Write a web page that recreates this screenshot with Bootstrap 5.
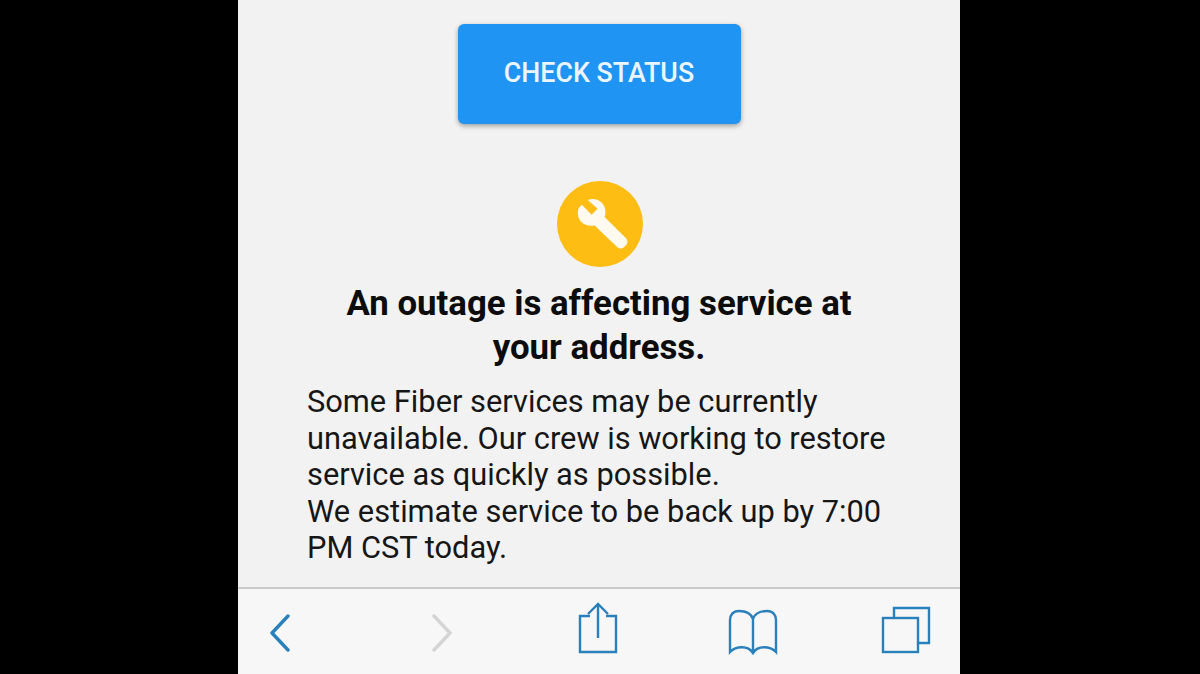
<!DOCTYPE html>
<html lang="en">
<head>
    <meta charset="UTF-8">
    <title>Outage</title>
    <link href="https://cdn.jsdelivr.net/npm/bootstrap@5.3.0/dist/css/bootstrap.min.css" rel="stylesheet">
    <style>
        html, body { height: 674px; overflow: hidden; background: #000; }
        body { font-family: Roboto, "Liberation Sans", sans-serif; color: #161616; }
        .phone-view { width: 722px; height: 674px; margin-left: 238px; background: #f2f2f2; }
        .page-area { height: 587px; padding-top: 24px; }
        .status-btn { width: 283px; height: 100px; background: #2094f3; border: 0; border-radius: 6px; color: #eaf5ff; font-size: 26.8px; font-weight: 500; box-shadow: 0 2px 5px rgba(0,0,0,.35); padding-bottom: 8px; }
        .status-btn:hover { background: #2094f3; color: #eaf5ff; }
        .wrench-circle { width: 86px; height: 86px; margin-top: 57px; margin-left: 2px; background: #fdbd13; }
        .outage-title { width: 600px; margin-top: 14px; font-size: 34.8px; line-height: 44px; font-weight: 700; color: #0c0c0c; }
        .outage-text { margin: 15px 0 0 69px; width: 590px; font-size: 30.8px; line-height: 36.6px; }
        .safari-bar { height: 87px; background: #f7f7f7; border-top: 2px solid #c8c8c8; display: grid; grid-template-columns: 84px 240px 72px 238px 68px; justify-items: center; align-items: start; }
        .safari-bar svg { display: block; fill: none; stroke-width: 2.4; }
        .tool-on { stroke: #2a80ba; }
        .tool-off { stroke: #d4d4d4; }
        .safari-bar .ico-back { margin-top: 25px; stroke-width: 3.4; }
        .ico-share { margin-top: 13px; }
        .ico-book { margin-top: 20px; }
        .ico-tabs { margin-top: 17px; }
    </style>
</head>
<body>
    <div class="phone-view d-flex flex-column" id="phone">
        <div class="page-area d-flex flex-column align-items-center">
            <button type="button" class="btn status-btn">CHECK STATUS</button>
            <div class="wrench-circle rounded-circle d-flex align-items-center justify-content-center">
                <svg width="55" height="55" viewBox="0 0 56 56">
                    <path d="M9 8 L19 18 L25 12 L15 3 C23 0 33 5 33 15 C33 17 33 19 32 20 L54 42 C56 44 56 47 54 49 L52 51 C50 53 47 53 45 51 L22 29 C13 31 4 25 5 15 C5 12 7 10 9 8 Z" fill="#fffaf0"/>
                </svg>
            </div>
            <h1 class="outage-title text-center mb-0">An outage is affecting service at<br>your address.</h1>
            <p class="outage-text align-self-start mb-0">Some Fiber services may be currently unavailable. Our crew is working to restore service as quickly as possible.<br>We estimate service to be back up by 7:00 PM CST today.</p>
        </div>
        <div class="safari-bar">
            <svg class="ico-back tool-on" width="22" height="38" viewBox="0 0 22 38"><path d="M19 2 L3 19 L19 36" stroke-linecap="round" stroke-linejoin="round"/></svg>
            <svg class="ico-back tool-off" width="22" height="38" viewBox="0 0 22 38"><path d="M3 2 L19 19 L3 36" stroke-linecap="round" stroke-linejoin="round"/></svg>
            <svg class="ico-share tool-on" width="40" height="52" viewBox="0 0 40 52"><path d="M12 14 H2 V50 H38 V14 H28 M20 36 V2 M10 12 L20 2 L30 12"/></svg>
            <svg class="ico-book tool-on" width="50" height="46" viewBox="0 0 50 46"><path d="M25 10 C23 4 17 2 11 2 C5 2 2 6 2 11 V43 C8 37 20 36 25 44 C30 36 42 37 48 43 V11 C48 6 45 2 39 2 C33 2 27 4 25 10 Z M25 10 V44"/></svg>
            <svg class="ico-tabs tool-on" width="50" height="48" viewBox="0 0 50 48"><path d="M13 11 V2 H48 V37 H37"/><rect x="2" y="12" width="35" height="34"/></svg>
        </div>
    </div>
    <script src="https://cdn.jsdelivr.net/npm/bootstrap@5.3.0/dist/js/bootstrap.bundle.min.js"></script>
</body>
</html>
